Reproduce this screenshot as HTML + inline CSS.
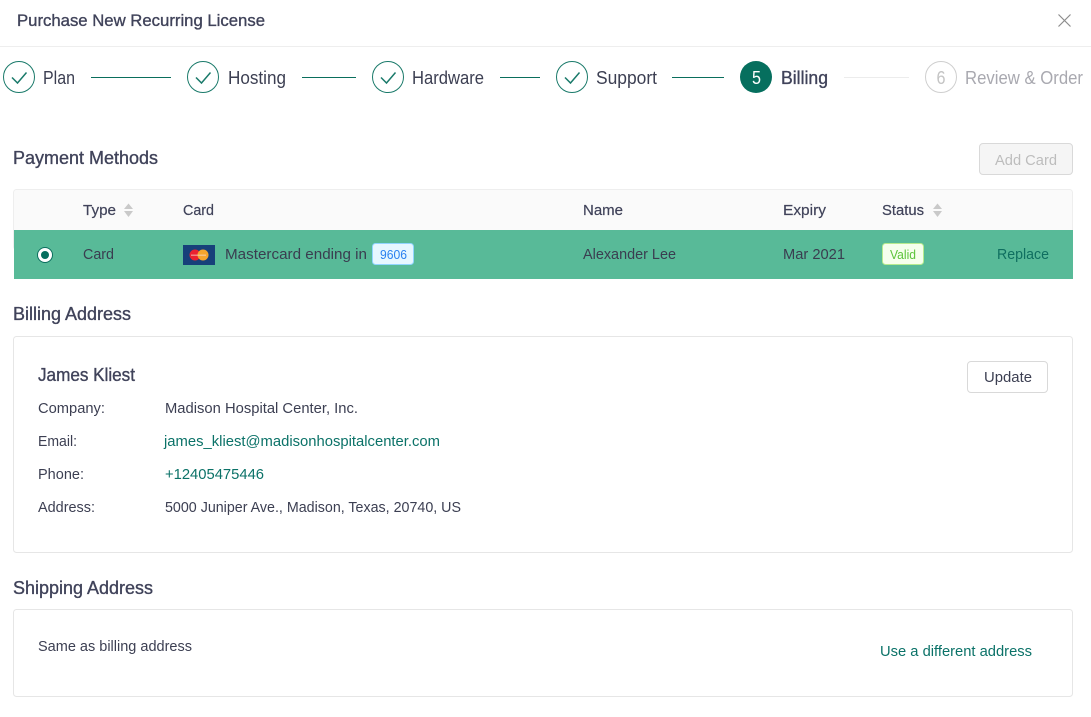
<!DOCTYPE html>
<html lang="en"><head><meta charset="utf-8"><title>Purchase New Recurring License</title>
<style>
html,body{margin:0;padding:0;background:#fff;width:1091px;height:717px;overflow:hidden}
svg{display:block}
text{font-family:"Liberation Sans",Arial,sans-serif;font-size:15px;fill:#3c3f52}
.h{font-size:18px;fill:#40435a;stroke:#40435a;stroke-width:.35px}
.s{font-size:18px}
.dg{fill:#3a3d50}
.lk{fill:#0b7268}
</style></head><body>
<svg width="1091" height="717" viewBox="0 0 1091 717" xmlns="http://www.w3.org/2000/svg">
<rect width="1091" height="717" fill="#fff"/>
<text class="h" x="17" y="26" textLength="248" lengthAdjust="spacingAndGlyphs" style="font-size:17px">Purchase New Recurring License</text>
<path d="M1058.500 14.500L1070.500 26.500M1070.500 14.500L1058.500 26.500" stroke="#8c8c8c" stroke-width="1.200" fill="none"/>
<rect x="0" y="46" width="1091" height="1" fill="#eeeeee"/>

<g fill="none" stroke="#1a7a6a">
<circle cx="19" cy="77" r="15.500" stroke-width="1"/>
<circle cx="203" cy="77" r="15.500" stroke-width="1"/>
<circle cx="388" cy="77" r="15.500" stroke-width="1"/>
<circle cx="572" cy="77" r="15.500" stroke-width="1"/>
<path d="M12 77.500L17.500 83L26.500 72.500M196 77.500L201.500 83L210.500 72.500M381 77.500L386.500 83L395.500 72.500M565 77.500L570.500 83L579.500 72.500" stroke-width="1.500"/>
<path d="M91 77.500H171M302 77.500H356M500 77.500H540M672 77.500H724" stroke-width="1" stroke="#0a6e5c"/>
</g>
<path d="M844 77.500H909" stroke="#ececec" stroke-width="1"/>
<circle cx="756" cy="77" r="16" fill="#066f5e"/>
<circle cx="941" cy="77" r="15.500" fill="#fff" stroke="#cfcfcf" stroke-width="1"/>
<text x="752" y="84" textLength="9" lengthAdjust="spacingAndGlyphs" style="font-size:18px;fill:#fff">5</text>
<text x="936.500" y="84" textLength="9" lengthAdjust="spacingAndGlyphs" style="font-size:18px;fill:#c4c4c4">6</text>
<text class="s" x="43" y="84" textLength="32" lengthAdjust="spacingAndGlyphs">Plan</text>
<text class="s" x="228" y="84" textLength="58" lengthAdjust="spacingAndGlyphs">Hosting</text>
<text class="s" x="412" y="84" textLength="72" lengthAdjust="spacingAndGlyphs">Hardware</text>
<text class="s" x="596" y="84" textLength="61" lengthAdjust="spacingAndGlyphs">Support</text>
<text class="h" x="781" y="84" textLength="47" lengthAdjust="spacingAndGlyphs">Billing</text>
<text class="s" x="965" y="84" textLength="118" lengthAdjust="spacingAndGlyphs" style="fill:#a9a9b0">Review &amp; Order</text>

<text class="h" x="13" y="164" textLength="145" lengthAdjust="spacingAndGlyphs">Payment Methods</text>
<rect x="979.500" y="143.500" width="93" height="31" rx="3.500" fill="#f5f5f5" stroke="#d9d9d9"/>
<text x="995" y="165" textLength="62" lengthAdjust="spacingAndGlyphs" style="fill:#bdbdbd">Add Card</text>

<rect x="13.500" y="189.500" width="1059" height="60" rx="3" fill="#fafafa" stroke="#eeeeee"/>
<rect x="14" y="230" width="1059" height="49" fill="#58ba98"/>
<text class="h" x="83" y="215" textLength="33" lengthAdjust="spacingAndGlyphs" style="font-size:15px;stroke-width:.2px">Type</text>
<text class="h" x="183" y="215" textLength="31" lengthAdjust="spacingAndGlyphs" style="font-size:15px;stroke-width:.2px">Card</text>
<text class="h" x="583" y="215" textLength="40" lengthAdjust="spacingAndGlyphs" style="font-size:15px;stroke-width:.2px">Name</text>
<text class="h" x="783" y="215" textLength="43" lengthAdjust="spacingAndGlyphs" style="font-size:15px;stroke-width:.2px">Expiry</text>
<text class="h" x="882" y="215" textLength="42" lengthAdjust="spacingAndGlyphs" style="font-size:15px;stroke-width:.2px">Status</text>
<path d="M128.500 203.500L133 209H124ZM124 211H133L128.500 217ZM937.500 203.500L942 209H933ZM933 211H942L937.500 217Z" fill="#c9c9c9"/>

<circle cx="45" cy="255" r="7.500" fill="#fff" stroke="#0b6e5e" stroke-width="1"/>
<circle cx="45" cy="255" r="4" fill="#066f5e"/>
<text class="dg" x="83" y="259" textLength="31" lengthAdjust="spacingAndGlyphs">Card</text>
<rect x="183" y="245" width="32" height="20" fill="#17407a"/>
<circle cx="195" cy="255" r="5.500" fill="#ea2230"/>
<circle cx="203" cy="255" r="5.500" fill="#f5a52e"/>
<rect x="191" y="254.500" width="15" height="1.500" fill="#f6d9c8" opacity=".55"/>
<text class="dg" x="225" y="259" textLength="142" lengthAdjust="spacingAndGlyphs">Mastercard ending in</text>
<rect x="372.500" y="243.500" width="41" height="21" rx="3" fill="#e6f7ff" stroke="#91d5ff"/>
<text x="380" y="259" textLength="27" lengthAdjust="spacingAndGlyphs" style="font-size:13px;fill:#2a80f0">9606</text>
<text class="dg" x="583" y="259" textLength="93" lengthAdjust="spacingAndGlyphs">Alexander Lee</text>
<text class="dg" x="783" y="259" textLength="62" lengthAdjust="spacingAndGlyphs">Mar 2021</text>
<rect x="882.500" y="243.500" width="41" height="21" rx="3" fill="#f6ffed" stroke="#b7eb8f"/>
<text x="890" y="259" textLength="26" lengthAdjust="spacingAndGlyphs" style="font-size:13px;fill:#5cc43a">Valid</text>
<text x="997" y="259" textLength="52" lengthAdjust="spacingAndGlyphs" style="fill:#0f6f60">Replace</text>

<text class="h" x="13" y="320" textLength="118" lengthAdjust="spacingAndGlyphs">Billing Address</text>
<rect x="13.500" y="336.500" width="1059" height="216" rx="3" fill="#fff" stroke="#e6e6e6"/>
<text class="h" x="38" y="381" textLength="97" lengthAdjust="spacingAndGlyphs">James Kliest</text>
<rect x="967.500" y="361.500" width="80" height="31" rx="3.500" fill="#fff" stroke="#d9d9d9"/>
<text x="984" y="382" textLength="48" lengthAdjust="spacingAndGlyphs">Update</text>
<text x="38" y="413" textLength="67" lengthAdjust="spacingAndGlyphs">Company:</text>
<text x="165" y="413" textLength="193" lengthAdjust="spacingAndGlyphs">Madison Hospital Center, Inc.</text>
<text x="38" y="446" textLength="39" lengthAdjust="spacingAndGlyphs">Email:</text>
<text class="lk" x="164" y="446" textLength="276" lengthAdjust="spacingAndGlyphs">james_kliest@madisonhospitalcenter.com</text>
<text x="38" y="479" textLength="46" lengthAdjust="spacingAndGlyphs">Phone:</text>
<text class="lk" x="165" y="479" textLength="99" lengthAdjust="spacingAndGlyphs">+12405475446</text>
<text x="38" y="512" textLength="57" lengthAdjust="spacingAndGlyphs">Address:</text>
<text x="165" y="512" textLength="296" lengthAdjust="spacingAndGlyphs">5000 Juniper Ave., Madison, Texas, 20740, US</text>

<text class="h" x="13" y="594" textLength="140" lengthAdjust="spacingAndGlyphs">Shipping Address</text>
<rect x="13.500" y="609.500" width="1059" height="87" rx="3" fill="#fff" stroke="#e6e6e6"/>
<text x="38" y="651" textLength="154" lengthAdjust="spacingAndGlyphs">Same as billing address</text>
<text class="lk" x="880" y="656" textLength="152" lengthAdjust="spacingAndGlyphs">Use a different address</text>
</svg>
</body></html>
